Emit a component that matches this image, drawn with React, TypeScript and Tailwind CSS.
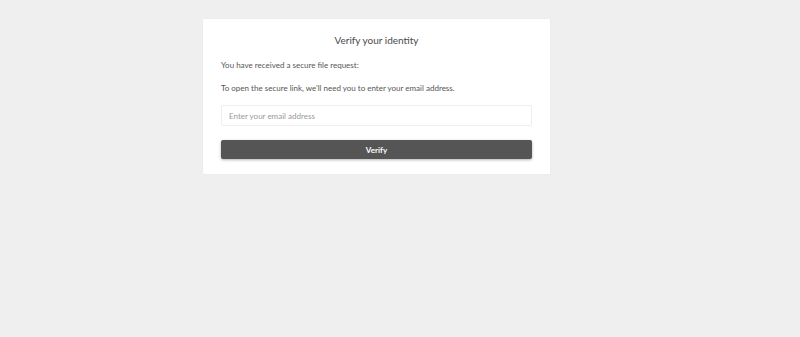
export default function App() {
  return (
    <div className="min-h-[337px] bg-[#efefef] pt-[19px] font-['Lato',sans-serif] text-[#555]">
      <div className="ml-[203px] flex w-[347px] flex-col bg-white px-[18px] pb-[15px] pt-[13px] shadow-[0_0_1px_rgba(0,0,0,0.08)]">
        <h1 className="text-center text-[10px] leading-[16px] text-[#4a4a4a]">Verify your identity</h1>
        <p className="mt-[11px] text-[8px] leading-[12px]">You have received a secure file request:</p>
        <p className="mt-[11px] text-[8px] leading-[12px]">To open the secure link, we'll need you to enter your email address.</p>
        <input
          type="text"
          placeholder="Enter your email address"
          className="mt-[11px] h-[21px] w-full rounded-[2px] border border-[#eee] px-[7px] text-[8px] text-[#555] placeholder-[#999] outline-none"
        />
        <button className="mt-[14px] h-[19px] w-full rounded-[2px] bg-[#555] text-[8px] font-bold text-white shadow-[0_1px_3px_rgba(0,0,0,0.3)]">
          Verify
        </button>
      </div>
    </div>
  );
}
